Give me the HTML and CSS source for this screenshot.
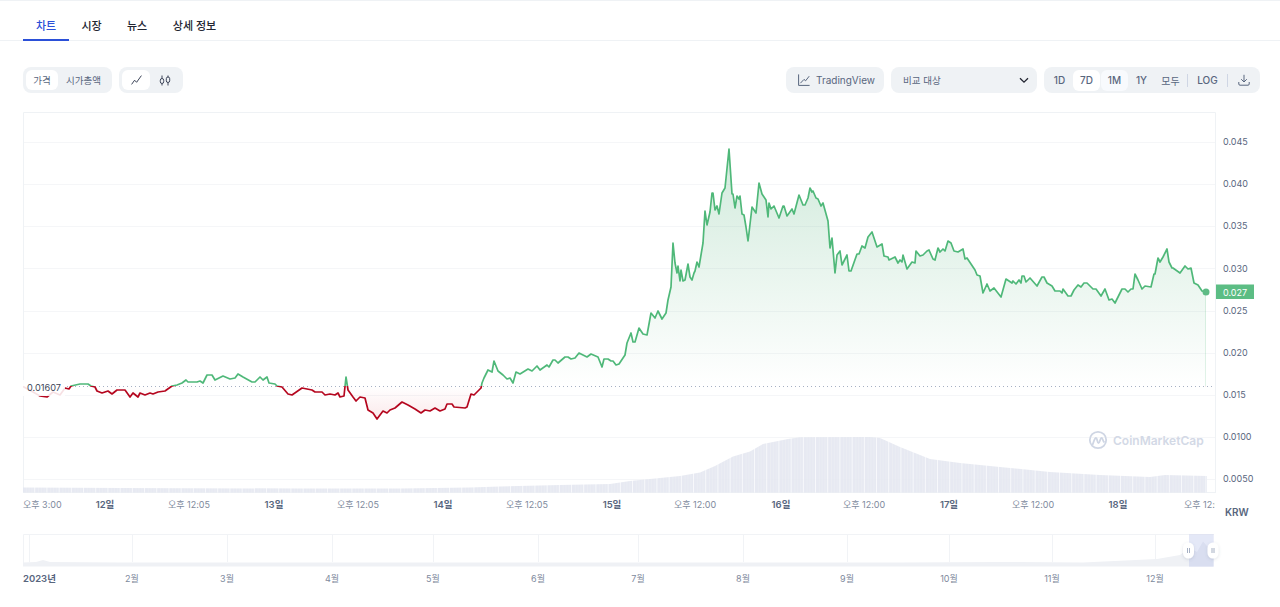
FILE: index.html
```html
<!DOCTYPE html>
<html lang="ko">
<head>
<meta charset="utf-8">
<title>차트</title>
<link rel="stylesheet" href="styles.css">
</head>
<body>
<nav class="tabs">
  <a class="tab active">차트</a>
  <a class="tab">시장</a>
  <a class="tab">뉴스</a>
  <a class="tab">상세 정보</a>
</nav>

<div class="toolbar">
  <div class="toolbar-side">
    <div class="group">
      <button class="seg on wide">가격</button>
      <button class="seg cap">시가총액</button>
    </div>
    <div class="group">
      <button class="seg on icon">
        <svg width="11" height="10" viewBox="0 0 11 10" class="ico dark"><path d="M.6 9.400 3.600 5.200l2 2.100L10.400.600"/></svg>
      </button>
      <button class="seg icon">
        <svg width="12" height="11" viewBox="0 0 12 11" class="ico dark"><path d="M3 .5v3M3 8.500v2M9 .5v1.500M9 7.500v3"/><rect x="1.300" y="3.500" width="3.400" height="5" rx="1.700"/><rect x="7.300" y="2" width="3.400" height="5.500" rx="1.700"/></svg>
      </button>
    </div>
  </div>
  <div class="toolbar-side">
    <button class="plain tv">
      <svg width="12" height="12" viewBox="0 0 12 12" class="ico"><path d="M.6.4v11h11M2.400 9.200 6 5.400l1.600 1.400 3.600-4.600"/></svg>
      TradingView
    </button>
    <div class="plain select">
      <span>비교 대상</span>
      <svg width="10" height="7" viewBox="0 0 10 7" class="ico strong"><path d="M1 1.200 5 5.200l4-4"/></svg>
    </div>
    <div class="group range">
      <button class="rng">1D</button>
      <button class="rng on">7D</button>
      <button class="rng hover">1M</button>
      <button class="rng">1Y</button>
      <button class="rng narrow">모두</button>
      <span class="sep"></span>
      <button class="rng log">LOG</button>
      <span class="sep"></span>
      <button class="rng dl">
        <svg width="12" height="12" viewBox="0 0 12 12" class="ico"><path d="M6 .8v7M3.200 5.200 6 8l2.800-2.800M.8 8v2a1.200 1.200 0 0 0 1.200 1.200h8A1.200 1.200 0 0 0 11.200 10V8"/></svg>
      </button>
    </div>
  </div>
</div>

<svg class="plot" width="1280" height="420" viewBox="0 105 1280 420">
  <defs>
    <linearGradient id="lineColor" gradientUnits="userSpaceOnUse" x1="0" y1="149" x2="0" y2="419">
      <stop offset="0.8796" stop-color="#4fb879"/>
      <stop offset="0.8796" stop-color="#b5071f"/>
    </linearGradient>
    <linearGradient id="areaColor" gradientUnits="userSpaceOnUse" x1="0" y1="149" x2="0" y2="419">
      <stop offset="0" stop-color="#3fa96c" stop-opacity=".24"/>
      <stop offset="0.8796" stop-color="#3fa96c" stop-opacity="0"/>
      <stop offset="0.8796" stop-color="#d8232f" stop-opacity="0"/>
      <stop offset="1" stop-color="#d8232f" stop-opacity=".1"/>
    </linearGradient>
    <pattern id="volStripes" patternUnits="userSpaceOnUse" width="12.2" height="10" x="23" y="0">
      <rect width="12.2" height="10" fill="#e4e7f0"/>
      <rect x="3" width=".5" height="10" fill="#eef0f5"/>
      <rect x="6" width=".5" height="10" fill="#eef0f5"/>
      <rect x="9" width=".5" height="10" fill="#eef0f5"/>
      <rect x="11.400" width=".8" height="10" fill="#fbfbfd"/>
    </pattern>
    <clipPath id="lineClip"><rect x="23" y="105" width="1182.200" height="390"/></clipPath>
    <path id="price" d="M23 386.500L33 392 40 396 47 397 53 392 60 395 65 388 69 389 71 386 80 384 88 384 91 386 95 387 97 391 102 393 108 391 112 394 117 390 125 390 130 397 133 393 138 397 140 393 145 395 150 393 153 394 158 392 165 391 172 386 177 385 182 383 186 380 188 382 197 382 200 381 203 383 207 375 212 375 215 380 223 376 230 379 235 378 238 374 243 377 252 382 255 382 260 377 263 380 267 377 269 383 275 384 277 386 282 387 288 394 292 395 302 388 312 390 315 392 322 392 325 395 330 394 335 395 338 393 340 397 344 396 346 377 348 390 353 397 356 401 360 397 365 398 368 410 373 413 377 419 383 411 387 413 390 410 395 408 402 402 408 405 415 409 421 413 425 410 430 411 435 408 440 411 445 409 447 404 452 404 454 407 465 408 467 407 471 394 474 395 481 388 482 383 484 378 488 370 492 372 494 361 498 371 503 375 507 379 510 378 513 383 516 372 520 374 528 369 532 371 537 366 540 370 547 365 549 367 553 360 555 360 558 363 565 357 568 357 571 359 575 358 579 353 587 357 591 354 598 357 602 367 604 359 608 359 611 361 613 361 616 365 619 364 625 355 627 343 631 333 633 342 635 342 639 328 643 334 647 335 651 313 655 318 658 311 662 319 666 313 668 300 671 287 673 243 675 263 677 273 678 266 680 281 681 270 683 281 685 280 688 264 690 277 692 280 694 273 695 271 697 262 699 267 703 243 705 211 707 225 710 212 712 193 713 193 715 210 717 206 719 214 722 193 725 188 729 149 732 194 733 194 735 208 737 196 739 199 740 196 742 214 744 215 746 227 748 241 749 233 752 207 756 213 759 183 762 194 766 200 768 217 769 203 771 209 774 206 779 218 783 206 784 206 787 216 792 209 794 214 799 195 803 205 805 205 808 198 810 188 812 192 813 191 816 198 818 199 821 206 823 203 828 221 830 248 832 238 835 273 837 255 840 251 842 265 847 255 849 271 851 271 857 254 859 254 862 246 865 248 868 237 872 232 877 247 882 244 884 256 888 257 889 260 895 257 898 263 900 260 902 262 903 255 907 269 912 262 915 263 916 251 920 256 923 255 927 251 929 250 933 259 935 260 938 248 940 252 943 249 945 251 948 241 951 243 954 251 958 252 963 249 965 259 967 258 975 270 977 275 980 276 983 293 987 284 990 291 994 288 1001 297 1006 279 1012 283 1013 281 1016 284 1019 280 1021 283 1022 276 1024 276 1026 282 1030 278 1037 286 1042 277 1044 277 1047 283 1052 286 1055 291 1060 291 1062 293 1063 289 1068 296 1071 296 1074 290 1078 285 1081 287 1084 283 1087 283 1093 289 1096 289 1101 296 1105 289 1109 300 1112 299 1115 303 1122 289 1125 289 1128 292 1131 289 1133 289 1135 274 1138 280 1142 289 1145 286 1151 287 1154 274 1155 274 1158 258 1160 262 1163 257 1167 249 1169 262 1172 268 1173 268 1180 273 1185 266 1188 269 1191 268 1194 283 1198 285 1202 291 1206 292 1206 386.500"/>
  </defs>

  <g class="grid">
    <path d="M23 142.500H1215M23 184.500H1215M23 226.500H1215M23 268.500H1215M23 311.500H1215M23 353.500H1215M23 395.500H1215M23 437.500H1215M23 479.500H1215"/>
  </g>
  <path class="frame" d="M23.500 493V112.500H1215.500V493M23 492.500H1215.500"/>

  <path class="volume" d="M23 492.500V487.500L120 488 300 488.500 400 488.500 470 487.500 500 486.500 560 485 610 484 630 481 680 476 700 472.500 715 466 733 456.500 750 451.500 763 444 788 439 800 437.300 870 437 880 438 900 447 930 459 960 463 1000 467 1050 472 1100 475 1150 477 1165 475 1207 476V492.500Z"/>

  <use href="#price" class="area"/>
  <line class="baseline" x1="23" y1="386.500" x2="1215" y2="386.500"/>
  <g clip-path="url(#lineClip)"><use href="#price" class="line"/></g>
  <circle class="dot" cx="1206" cy="292" r="3.500"/>

  <rect class="base-bg" x="23" y="380" width="42" height="16"/>
  <text class="base-label" x="27" y="391">0.01607</text>

  <g class="ylabels">
    <text x="1223" y="145">0.045</text>
    <text x="1223" y="187">0.040</text>
    <text x="1223" y="229">0.035</text>
    <text x="1223" y="272">0.030</text>
    <text x="1223" y="314">0.025</text>
    <text x="1223" y="356">0.020</text>
    <text x="1223" y="398">0.015</text>
    <text x="1223" y="440">0.0100</text>
    <text x="1223" y="482">0.0050</text>
  </g>
  <rect class="price-tag" x="1216" y="284.500" width="38" height="14.500"/>
  <text class="price-text" x="1223" y="295.500">0.027</text>

  <svg x="23" y="495" width="1192" height="20" viewBox="23 495 1192 20">
    <g class="xlabels">
      <text x="23" y="507.500">오후 3:00</text>
      <text class="day" x="105" y="507.500" text-anchor="middle">12일</text>
      <text x="189" y="507.500" text-anchor="middle">오후 12:05</text>
      <text class="day" x="274" y="507.500" text-anchor="middle">13일</text>
      <text x="358" y="507.500" text-anchor="middle">오후 12:05</text>
      <text class="day" x="443" y="507.500" text-anchor="middle">14일</text>
      <text x="527" y="507.500" text-anchor="middle">오후 12:05</text>
      <text class="day" x="612" y="507.500" text-anchor="middle">15일</text>
      <text x="695" y="507.500" text-anchor="middle">오후 12:00</text>
      <text class="day" x="781" y="507.500" text-anchor="middle">16일</text>
      <text x="864" y="507.500" text-anchor="middle">오후 12:00</text>
      <text class="day" x="949" y="507.500" text-anchor="middle">17일</text>
      <text x="1033" y="507.500" text-anchor="middle">오후 12:00</text>
      <text class="day" x="1118" y="507.500" text-anchor="middle">18일</text>
      <text x="1184" y="507.500">오후 12:05</text>
    </g>
  </svg>
  <text class="currency" x="1225" y="515.500">KRW</text>

  <g class="logo">
    <circle cx="1098" cy="440" r="8.200"/>
    <path d="M1092.500 445c1.500-4 2-7 3.500-7s1 5 2.500 5 1.500-5 3-5 1 3 3 4.500"/>
    <text x="1113" y="445">CoinMarketCap</text>
  </g>
</svg>

<svg class="navigator" width="1280" height="70" viewBox="0 525 1280 70">
  <defs>
    <filter id="handleShadow" x="-50%" y="-50%" width="200%" height="200%">
      <feDropShadow dx="0" dy="1" stdDeviation="1.500" flood-color="#58667e" flood-opacity=".2"/>
    </filter>
  </defs>
  <path class="nav-grid" d="M29.500 534V562M132.500 534V562M227.500 534V562M332.500 534V562M433.500 534V562M538.500 534V562M638.500 534V562M743.500 534V562M847.500 534V562M949.500 534V562M1052.500 534V562M1155.500 534V562"/>
  <path class="nav-frame" d="M23.500 566V534.500H1214"/>
  <path class="nav-area" d="M23 566.500V562.500L36 562 43 560 50 562 120 562.500 400 562.500 700 562.500 900 562.500 1000 562 1083 562.500 1157 559 1180 555 1189 548 1197 552 1203 541.500 1207 546 1213.500 550V566.500Z"/>
  <rect class="nav-range" x="1189" y="534.300" width="24.700" height="32.400"/>
  <g class="handle"><rect x="1183" y="542.500" width="11" height="16" rx="5.500"/><path d="M1187.500 548v5M1189.500 548v5"/></g>
  <g class="handle"><rect x="1207.500" y="542.500" width="11" height="16" rx="5.500"/><path d="M1212 548v5M1214 548v5"/></g>
  <g class="months">
    <text class="year" x="23" y="581.500">2023년</text>
    <text x="132" y="581.500" text-anchor="middle">2월</text>
    <text x="227" y="581.500" text-anchor="middle">3월</text>
    <text x="332" y="581.500" text-anchor="middle">4월</text>
    <text x="433" y="581.500" text-anchor="middle">5월</text>
    <text x="538" y="581.500" text-anchor="middle">6월</text>
    <text x="638" y="581.500" text-anchor="middle">7월</text>
    <text x="743" y="581.500" text-anchor="middle">8월</text>
    <text x="847" y="581.500" text-anchor="middle">9월</text>
    <text x="949" y="581.500" text-anchor="middle">10월</text>
    <text x="1052" y="581.500" text-anchor="middle">11월</text>
    <text x="1155" y="581.500" text-anchor="middle">12월</text>
  </g>
</svg>
</body>
</html>
```

FILE: styles.css
```css
* { box-sizing: border-box; }
html, body { margin: 0; padding: 0; background: #fff; overflow: hidden; }
body {
  width: 1280px;
  height: 607px;
  font-family: Inter, "Noto Sans CJK KR", sans-serif;
  color: #222531;
}
button { font: inherit; border: 0; background: none; padding: 0; color: inherit; }

.tabs {
  display: flex;
  height: 41px;
  padding: 0 0 0 23px;
  border-top: 1px solid #eff2f5;
  border-bottom: 1px solid #eff2f5;
}
.tab {
  width: 46px;
  text-align: center;
  font-size: 11px;
  font-weight: 500;
  line-height: 51px;
  height: 40px;
  overflow: hidden;
  color: #222531;
}
.tab:nth-child(2) { width: 45px; }
.tab:nth-child(4) { width: 69px; }
.tab.active { color: #2b50d8; border-bottom: 2px solid #2b50d8; }

.toolbar {
  display: flex;
  justify-content: space-between;
  padding: 26px 20px 0 23px;
  height: 64px;
}
.toolbar-side { display: flex; gap: 7px; }
.group {
  display: flex;
  align-items: center;
  height: 26px;
  padding: 3px;
  background: #eff2f5;
  border-radius: 8px;
}
.seg {
  height: 20px;
  font-size: 9.500px;
  color: #58667e;
  border-radius: 6px;
  display: flex;
  align-items: center;
  justify-content: center;
}
.seg.on { background: #fff; }
.seg.wide { width: 32px; }
.seg.cap { width: 51px; }
.seg.icon { width: 28px; }
.seg.icon + .seg.icon { width: 30px; }

.ico { fill: none; stroke: #58667e; stroke-width: 1; }
.ico.dark { stroke: #3d4559; }
.ico.strong { stroke: #222531; stroke-width: 1.300; }

.plain {
  height: 26px;
  background: #eff2f5;
  border-radius: 8px;
  display: flex;
  align-items: center;
  font-size: 10px;
  color: #58667e;
}
.tv { width: 98px; padding-left: 12px; gap: 6px; }
.select {
  width: 146px;
  padding: 0 8px 0 12px;
  justify-content: space-between;
  font-size: 9.500px;
}
.range { width: 216px; padding: 3px 0 3px 2px; }
.rng {
  width: 27px;
  height: 21px;
  flex: none;
  font-size: 10px;
  font-weight: 500;
  color: #58667e;
  border-radius: 6px;
  display: flex;
  align-items: center;
  justify-content: center;
}
.rng.on { background: #fff; }
.rng.hover { background: #f8fafd; margin-left: 1px; }
.rng.narrow { width: 31px; margin-right: 1px; font-weight: 400; }
.rng.log { width: 39px; }
.rng.dl { width: 32px; }
.sep { width: 1px; height: 13px; background: #cfd6e4; flex: none; }

.plot, .navigator { display: block; }
.plot text, .navigator text { font-family: Inter, "Noto Sans CJK KR", sans-serif; }

.grid path { stroke: #f5f6f8; stroke-width: 1; fill: none; }
.frame { stroke: #eff2f5; stroke-width: 1; fill: none; }
.volume { fill: url(#volStripes); opacity: .9; }
.area { fill: url(#areaColor); stroke: none; }
.line { fill: none; stroke: url(#lineColor); stroke-width: 1.700; stroke-linejoin: round; }
.baseline { stroke: #a6b0c3; stroke-width: 1; stroke-dasharray: 1 3; }
.dot { fill: #5ebb85; }
.base-bg { fill: #fff; fill-opacity: .88; }
.base-label { font-size: 9.200px; fill: #3d4559; }
.ylabels text { font-size: 9px; fill: #58667e; }
.price-tag { fill: #5cbd84; }
.price-text { font-size: 9px; fill: #fff; }
.xlabels text { font-size: 9px; fill: #808a9d; }
.xlabels .day { fill: #58667e; font-size: 9.500px; font-weight: 600; }
.currency { font-size: 10px; font-weight: 600; fill: #58667e; }

.logo circle { fill: none; stroke: #cfd6e4; stroke-width: 1.800; }
.logo path { fill: none; stroke: #cfd6e4; stroke-width: 1.800; stroke-linejoin: round; }
.logo text { font-size: 12px; font-weight: 600; fill: #d3d9e6; }

.nav-grid, .nav-frame { stroke: #f1f3f6; stroke-width: 1; fill: none; }
.nav-area { fill: #eff1f5; }
.nav-range { fill: #a7b4e6; fill-opacity: .3; }
.handle rect { fill: #fff; filter: url(#handleShadow); }
.handle path { stroke: #a6b0c3; stroke-width: 1; fill: none; }
.months text { font-size: 9px; fill: #808a9d; }
.months .year { fill: #58667e; font-size: 9.500px; font-weight: 600; }
```
